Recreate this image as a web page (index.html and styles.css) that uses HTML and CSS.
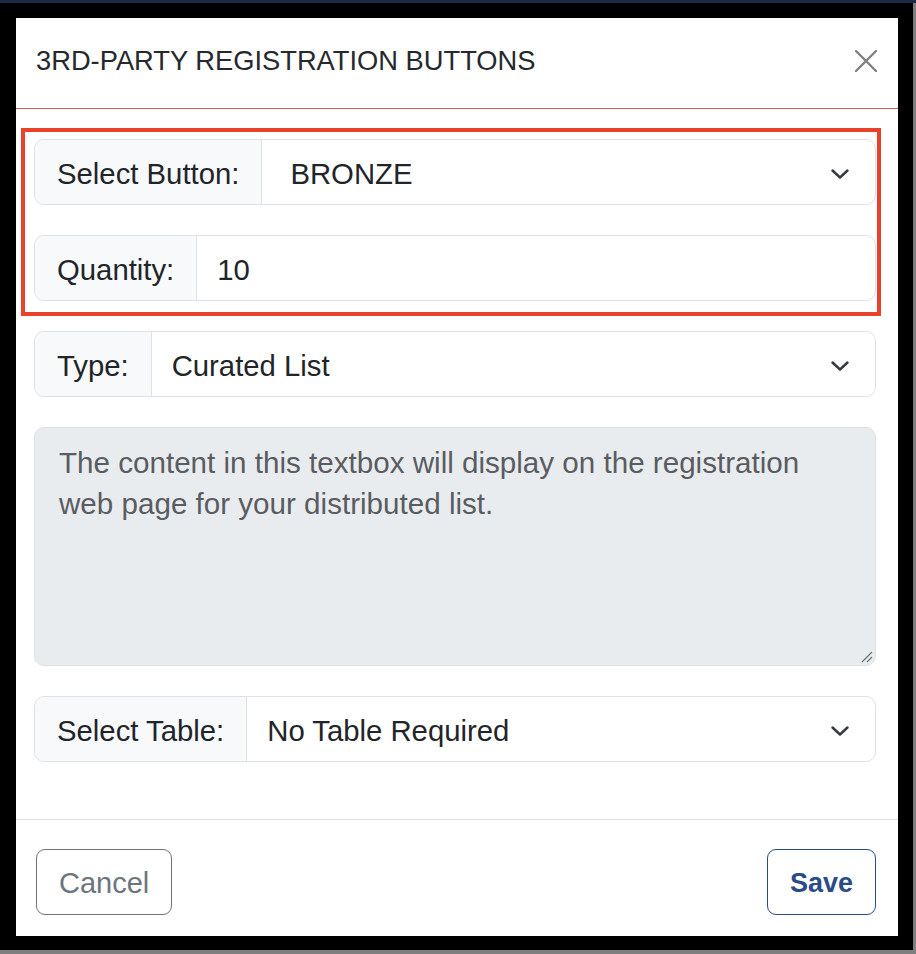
FILE: index.html
```html
<!DOCTYPE html>
<html lang="en">
<head>
<meta charset="utf-8">
<title>3rd-Party Registration Buttons</title>
<link rel="stylesheet" href="styles.css">
</head>
<body>
<div class="backdrop">
  <div class="modal">
    <div class="modal-header">
      <h5 class="modal-title">3RD-PARTY REGISTRATION BUTTONS</h5>
      <button class="close" aria-label="Close">
        <svg width="22" height="22" viewBox="0 0 22 22"><path d="M1 1L21 21M21 1L1 21" stroke="#808080" stroke-width="2.4" stroke-linecap="round"/></svg>
      </button>
    </div>
    <div class="modal-body">
      <div class="highlight"></div>
      <div class="input-group">
        <span class="addon">Select Button:</span>
        <div class="control select wide">BRONZE
          <svg class="chev" width="18" height="10" viewBox="0 0 18 10"><path d="M1.5 1.5L9 8.5L16.5 1.5" fill="none" stroke="#343a40" stroke-width="2.4" stroke-linecap="round" stroke-linejoin="round"/></svg>
        </div>
      </div>
      <div class="input-group">
        <span class="addon">Quantity:</span>
        <div class="control">10</div>
      </div>
      <div class="input-group">
        <span class="addon">Type:</span>
        <div class="control select">Curated List
          <svg class="chev" width="18" height="10" viewBox="0 0 18 10"><path d="M1.5 1.5L9 8.5L16.5 1.5" fill="none" stroke="#343a40" stroke-width="2.4" stroke-linecap="round" stroke-linejoin="round"/></svg>
        </div>
      </div>
      <div class="textarea" role="textbox" aria-readonly="true">The content in this textbox will display on the registration web page for your distributed list.
        <svg class="grip" width="14" height="14" viewBox="0 0 14 14"><path d="M13 3L3 13M13 8L8 13" stroke="#6f7277" stroke-width="1.2"/></svg>
      </div>
      <div class="input-group last">
        <span class="addon">Select Table:</span>
        <div class="control select">No Table Required
          <svg class="chev" width="18" height="10" viewBox="0 0 18 10"><path d="M1.5 1.5L9 8.5L16.5 1.5" fill="none" stroke="#343a40" stroke-width="2.4" stroke-linecap="round" stroke-linejoin="round"/></svg>
        </div>
      </div>
    </div>
    <div class="modal-footer">
      <button class="btn btn-cancel">Cancel</button>
      <button class="btn btn-save">Save</button>
    </div>
  </div>
</div>
</body>
</html>
```
FILE: styles.css
```css
html, body {
  margin: 0;
  padding: 0;
}
body {
  background: #7f7f7f;
  border-top: 3px solid #1d2b45;
  width: 916px;
  height: 951px;
  font-family: "Liberation Sans", Arial, sans-serif;
  color: #212529;
}
.backdrop {
  background: #000;
  width: 913px;
  height: 947px;
  box-sizing: border-box;
  padding: 15px 15px 14px 16px;
}
.modal {
  background: #fff;
  width: 882px;
  height: 918px;
  display: flex;
  flex-direction: column;
}
.modal-header {
  height: 91px;
  border-bottom: 1px solid #e2604f;
  display: flex;
  align-items: center;
  justify-content: space-between;
  padding: 0 21px 5px 20px;
  box-sizing: border-box;
}
.modal-title {
  margin: 0;
  font-size: 27.3px;
  font-weight: 400;
  color: #25282c;
}
.close {
  border: 0;
  background: none;
  padding: 0;
  width: 22px;
  height: 22px;
  display: flex;
}
.modal-body {
  position: relative;
  padding: 30px 22px 56px 18px;
  display: flex;
  flex-direction: column;
  gap: 30px;
}
.highlight {
  position: absolute;
  left: 5px;
  top: 19px;
  width: 860px;
  height: 188px;
  box-sizing: border-box;
  border: 4px solid #e8432a;
  pointer-events: none;
}
.input-group {
  display: flex;
  height: 66px;
  border: 1px solid #dee2e6;
  border-radius: 10px;
  box-sizing: border-box;
  font-size: 29.3px;
}
.addon {
  background: #f8f9fa;
  border-right: 1px solid #dee2e6;
  border-radius: 10px 0 0 10px;
  padding: 4px 22px 0;
  display: flex;
  align-items: center;
  white-space: nowrap;
}
.control {
  flex: 1;
  display: flex;
  align-items: center;
  padding: 4px 22px 0 20px;
}
.control.wide {
  padding-left: 28px;
}
.select {
  justify-content: space-between;
  padding-right: 26px;
}
.chev {
  margin-top: -1px;
}
.textarea {
  position: relative;
  height: 239px;
  box-sizing: border-box;
  background: #e9ecef;
  border: 1px solid #dee2e6;
  border-radius: 10px;
  padding: 14px 24px;
  font-size: 29.6px;
  line-height: 41px;
  color: #595c61;
}
.grip {
  position: absolute;
  right: 2px;
  bottom: 2px;
}
.modal-footer {
  margin-top: auto;
  border-top: 1px solid #dee2e6;
  padding: 29px 22px 21px 20px;
  display: flex;
  justify-content: space-between;
}
.btn {
  height: 66px;
  padding: 2px 22px 0;
  background: #fff;
  border-radius: 9px;
  font-family: "Liberation Sans", Arial, sans-serif;
  font-size: 29px;
}
.btn-cancel {
  border: 1px solid #6c757d;
  color: #6c757d;
}
.btn-save {
  border: 1px solid #2b4b86;
  color: #2b4b86;
  font-weight: 700;
  font-size: 27px;
}
```
